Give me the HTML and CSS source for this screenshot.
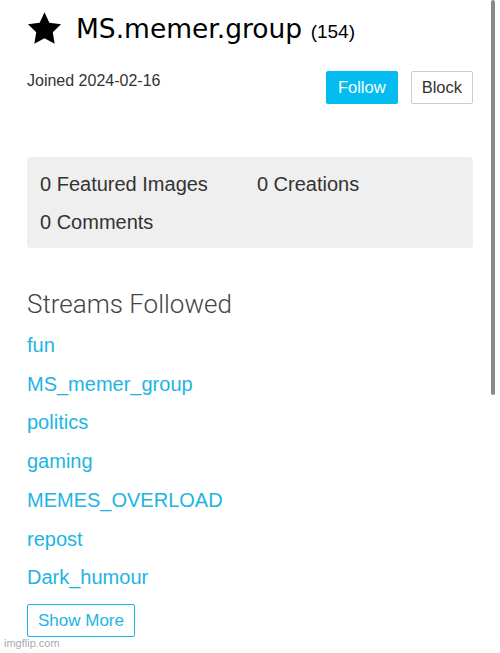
FILE: index.html
```html
<!DOCTYPE html>
<html lang="en">
<head>
    <meta charset="UTF-8">
    <meta name="viewport" content="width=device-width, initial-scale=1.0">
    <title>MS.memer.group</title>
    <link rel="stylesheet" href="styles.css">
</head>
<body>
    <div class="page">
        <!-- User header -->
        <header class="user-head">
            <svg class="star" viewBox="2 2 20 19.02" width="33" height="32" aria-hidden="true">
                <path d="M12 2l2.94 6.26L22 9.27l-5 4.87 1.18 6.88L12 17.77l-6.18 3.25L7 14.14 2 9.27l7.06-1.01z" fill="#000"/>
            </svg>
            <h1 class="user-name">MS.memer.group <span class="points">(154)</span></h1>
        </header>

        <div class="meta-row">
            <div class="joined">Joined 2024-02-16</div>
            <div class="actions">
                <div class="btn btn-follow">Follow</div>
                <div class="btn btn-block">Block</div>
            </div>
        </div>

        <!-- Stats -->
        <div class="stats">
            <div class="stat">0 Featured Images</div>
            <div class="stat">0 Creations</div>
            <div class="stat">0 Comments</div>
        </div>

        <!-- Streams -->
        <h2 class="section-title">Streams Followed</h2>
        <div class="streams">
            <a class="stream" href="#">fun</a>
            <a class="stream" href="#">MS_memer_group</a>
            <a class="stream" href="#">politics</a>
            <a class="stream" href="#">gaming</a>
            <a class="stream" href="#">MEMES_OVERLOAD</a>
            <a class="stream" href="#">repost</a>
            <a class="stream" href="#">Dark_humour</a>
        </div>
        <div class="btn btn-more">Show More</div>
    </div>

    <div class="scroll-thumb"></div>
    <div class="watermark">imgflip.com</div>
</body>
</html>
```

FILE: styles.css
```css
body {
    margin: 0;
    padding: 0;
    font-family: "Liberation Sans", Arial, sans-serif;
    color: #333;
    background: white;
    overflow: hidden;
}

.page {
    padding: 0 27px;
}

.user-head {
    display: flex;
    align-items: center;
    height: 56px;
}

.star {
    display: block;
    margin-left: 1px;
    margin-right: 15px;
}

.user-name {
    margin: 0;
    font-family: "DejaVu Sans", Verdana, sans-serif;
    font-size: 26.5px;
    font-weight: normal;
    color: #000;
}

.points {
    font-family: "Liberation Sans", Arial, sans-serif;
    font-size: 19px;
}

.meta-row {
    display: flex;
    justify-content: space-between;
    align-items: flex-start;
    margin-top: 15px;
}

.joined {
    font-size: 16px;
    line-height: 20px;
    color: #333;
}

.actions {
    display: flex;
    gap: 13px;
}

.btn {
    display: inline-block;
    padding: 0 11px;
    font-size: 16.5px;
    line-height: 31px;
    border: 1px solid #ccc;
    border-radius: 2px;
    cursor: pointer;
}

.btn-follow {
    background-color: #04bcf0;
    border-color: #04bcf0;
    color: white;
}

.btn-block {
    padding: 0 10px;
    color: #333;
    background: white;
}

.stats {
    display: flex;
    flex-wrap: wrap;
    column-gap: 49px;
    margin-top: 53px;
    padding: 8px 13px 7px;
    background-color: #efefef;
    border-radius: 4px;
    font-size: 20px;
    line-height: 38px;
    color: #333;
}

.section-title {
    margin: 40px 0 0;
    font-family: Roboto, "Liberation Sans", sans-serif;
    font-size: 26px;
    font-weight: 300;
    line-height: 32px;
    color: #444;
}

.streams {
    margin-top: 6px;
}

.stream {
    display: block;
    font-size: 20px;
    line-height: 38.7px;
    color: #1db4e4;
    text-decoration: none;
}

.btn-more {
    margin-top: 7px;
    padding: 0 10px;
    font-size: 17px;
    border-color: #1db4e4;
    color: #1db4e4;
}

.scroll-thumb {
    position: absolute;
    top: 0;
    left: 491px;
    width: 4px;
    height: 395px;
    background-color: #888;
    border-radius: 2px;
}

.watermark {
    position: absolute;
    left: 4px;
    top: 637px;
    font-size: 11px;
    color: #aaa;
}
```
